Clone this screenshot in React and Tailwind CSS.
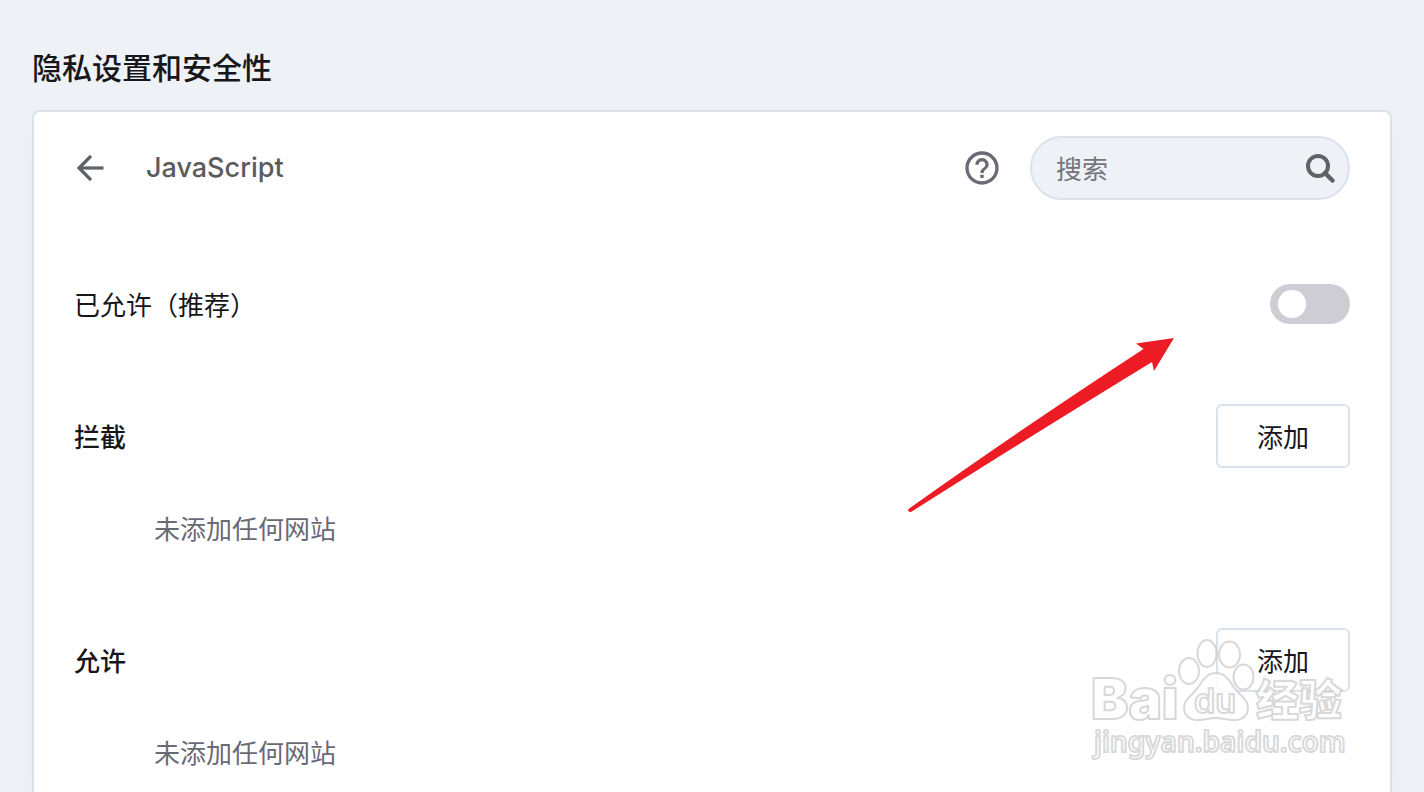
import React, { useState } from 'react';
import { MdHelpOutline } from 'react-icons/md';

const siteLists = [
  { id: 'block', title: '拦截' },
  { id: 'allow', title: '允许' },
];

const BackIcon = () => (
  <svg viewBox="0 0 32 32" className="h-8 w-8" fill="none" stroke="#5f6368" strokeWidth="3.2" aria-hidden="true">
    <path d="M29.500 16H5" />
    <path d="M17 4 5 16l12 12" strokeLinejoin="miter" />
  </svg>
);

const SearchIcon = () => (
  <svg viewBox="0 0 32 32" className="h-8 w-8 shrink-0" fill="none" stroke="#5f6368" strokeWidth="4" aria-hidden="true">
    <circle cx="14" cy="14" r="10" />
    <path d="M21 21l7.500 7.500" strokeWidth="4.5" strokeLinecap="round" />
  </svg>
);

const SearchBox = () => {
  const [query, setQuery] = useState('');

  return (
    <label className="flex h-16 w-80 items-center rounded-full border-2 border-[#dae3eb] bg-[#eef1f6] pr-3 pl-6">
      <input
        type="text"
        aria-label="搜索"
        placeholder="搜索"
        value={query}
        onChange={(e) => setQuery(e.target.value)}
        className="min-w-0 flex-1 bg-transparent text-[26px] leading-10 text-[#17171a] outline-none placeholder:text-[#74747c]"
      />
      <SearchIcon />
    </label>
  );
};

const Toggle = ({ id, checked, onChange }) => (
  <input
    id={id}
    type="checkbox"
    role="switch"
    checked={checked}
    onChange={onChange}
    className="flex h-10 w-20 cursor-pointer appearance-none items-center rounded-full bg-[#cfcdd4] px-2 before:h-7 before:w-7 before:rounded-full before:bg-white checked:justify-end checked:bg-blue-500"
  />
);

const SiteList = ({ title }) => (
  <section>
    <div className="flex h-16 items-center justify-between">
      <h3 className="text-[26px] leading-10 font-medium">{title}</h3>
      <button
        type="button"
        className="h-16 rounded-md border-2 border-[#dae3eb] bg-white px-[39px] text-[26px] leading-10"
      >
        添加
      </button>
    </div>
    <p className="mt-10 pl-20 text-[26px] leading-10 text-[#6a6a75]">未添加任何网站</p>
  </section>
);

const Arrow = () => (
  <svg viewBox="0 0 268 176" className="pointer-events-none absolute top-[337px] right-[248px] h-44 w-[268px]" aria-hidden="true">
    <path
      d="M0.500 172 Q110 94 235.500 12 L228 6.500 L266 1 L246 34 L244 25 Q115 104 3 175 Q-1 175.500 0.500 172Z"
      fill="#ed1c24"
    />
  </svg>
);

const Watermark = () => (
  <svg
    viewBox="0 0 260 130"
    className="pointer-events-none absolute top-[636px] right-[74px] h-[130px] w-[260px]"
    fill="#ffffff"
    fillOpacity="0.8"
    stroke="#c8c8c8"
    strokeOpacity="0.7"
    strokeWidth="2"
    strokeLinejoin="round"
    aria-hidden="true"
  >
    <ellipse cx="99" cy="35" rx="10" ry="13" />
    <ellipse cx="117" cy="17.500" rx="9.500" ry="13.500" />
    <ellipse cx="139.500" cy="18.500" rx="10.500" ry="13" />
    <ellipse cx="153.500" cy="41" rx="10" ry="12.500" />
    <path d="M126 37c-9 0-13 7-17 13-6 9-15 13-15 22 0 8 7 13 15 12 6 0 10-2 17-2s11 2 17 2c8 1 15-4 15-12 0-9-9-13-15-22-4-6-8-13-17-13z" />
    <text x="1" y="83" className="font-['Inter'] text-[56px] font-black">Bai</text>
    <text x="104" y="77" className="font-['Inter'] text-[34px] font-semibold">du</text>
    <text x="166" y="80" className="font-['Noto_Sans_CJK_SC'] text-[43px] font-black">经验</text>
    <text x="4" y="116" className="font-['Noto_Sans'] text-[28px] font-semibold">jingyan.baidu.com</text>
  </svg>
);

const App = () => {
  const [allowed, setAllowed] = useState(false);

  return (
    <div className="relative flex min-h-screen flex-col overflow-hidden bg-[#eef1f6] px-8 pt-12 font-['Noto_Sans_CJK_SC',sans-serif] text-[#17171a]">
      <h1 className="text-[30px] leading-9 font-medium">隐私设置和安全性</h1>

      <main className="mt-[26px] flex-1 rounded-t-lg border-2 border-b-0 border-[#dae3eb] bg-white px-10 pt-6 pb-5 shadow-[0_16px_32px_rgba(99,105,110,0.03)]">
        {/* Subpage header */}
        <header className="flex h-16 items-center justify-between">
          <div className="flex items-center gap-10">
            <button type="button" aria-label="返回">
              <BackIcon />
            </button>
            <h2 className="font-['Inter',sans-serif] text-[27px] leading-10 font-medium text-[#5b5b5e]">JavaScript</h2>
          </div>
          <div className="flex items-center gap-7">
            <a href="#help" aria-label="帮助">
              <MdHelpOutline className="h-10 w-10 text-[#6a6a75]" />
            </a>
            <SearchBox />
          </div>
        </header>

        <div className="mt-[72px] flex h-16 items-center justify-between">
          <label htmlFor="js-allowed" className="text-[26px] leading-10">
            已允许（推荐）
          </label>
          <Toggle id="js-allowed" checked={allowed} onChange={() => setAllowed(!allowed)} />
        </div>

        {/* Site exceptions */}
        <div className="mt-[68px] flex flex-col gap-20">
          {siteLists.map((list) => (
            <SiteList key={list.id} title={list.title} />
          ))}
        </div>
      </main>

      <Arrow />
      <Watermark />
    </div>
  );
};

export default App;
